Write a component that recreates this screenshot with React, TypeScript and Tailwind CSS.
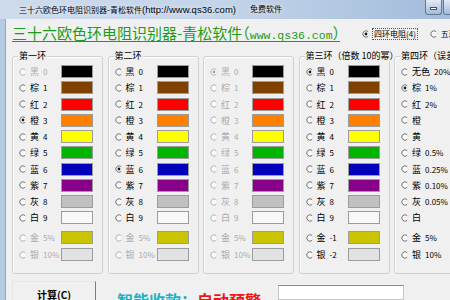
const CJK = "font-['Noto_Sans_CJK_SC',sans-serif]";

type Item = { c: string; n: string; sw?: string };

const BASE: [string, string, string][] = [
  ['黑', '0', 'bg-[#000000]'],
  ['棕', '1', 'bg-[#804000]'],
  ['红', '2', 'bg-[#ff0000]'],
  ['橙', '3', 'bg-[#ff8000]'],
  ['黄', '4', 'bg-[#ffff00]'],
  ['绿', '5', 'bg-[#00b400]'],
  ['蓝', '6', 'bg-[#0000b8]'],
  ['紫', '7', 'bg-[#880088]'],
  ['灰', '8', 'bg-[#c0c0c0]'],
  ['白', '9', 'bg-[#f8f8f8]'],
];

const mk = (gold: string, silver: string): Item[] => [
  ...BASE.map(([c, n, sw]) => ({ c, n, sw })),
  { c: '金', n: gold, sw: 'bg-[#c8c400]' },
  { c: '银', n: silver, sw: 'bg-[#e2e2e2]' },
];

const TOL: Item[] = [
  { c: '无色', n: '20%' },
  { c: '棕', n: '1%' },
  { c: '红', n: '2%' },
  { c: '橙', n: '' },
  { c: '黄', n: '' },
  { c: '绿', n: '0.5%' },
  { c: '蓝', n: '0.25%' },
  { c: '紫', n: '0.10%' },
  { c: '灰', n: '0.05%' },
  { c: '白', n: '' },
  { c: '金', n: '5%' },
  { c: '银', n: '10%' },
];

const BOXES = [
  { title: '第一环', items: mk('5%', '10%'), on: 3, dis: [0, 10, 11] },
  { title: '第二环', items: mk('5%', '10%'), on: 6, dis: [10, 11] },
  { title: '', items: mk('5%', '10%'), on: 0, dis: [0, 1, 2, 3, 4, 5, 6, 7, 8, 9, 10, 11] },
  { title: '第三环（倍数 10的幂）', items: mk('-1', '-2'), on: 0, dis: [] as number[] },
  { title: '第四环（误差范围）', items: TOL, on: 1, dis: [] as number[] },
];

function Radio({ on, dis }: { on?: boolean; dis?: boolean }) {
  return (
    <svg width="8" height="8" viewBox="0 0 8 8" className="shrink-0">
      <circle cx="4" cy="4" r="3.2" fill="#fbfbfb" stroke="#dedede" strokeWidth="0.8" />
      <path d="M6.06 1.55A3.2 3.2 0 1 0 6.06 6.45" fill="none" stroke={dis ? '#b4b4b4' : '#6e6e6e'} strokeWidth="0.9" />
      {on && <circle cx="4" cy="4" r="1.4" fill={dis ? '#a0a0a0' : '#1a1a1a'} />}
    </svg>
  );
}

function Row({ it, on, dis }: { it: Item; on: boolean; dis: boolean }) {
  return (
    <div className="flex items-center h-[13px]">
      <div className="w-[48px] flex items-center pl-[6px] gap-[3px]">
        <Radio on={on} dis={dis} />
        <span className={`text-[9px] leading-none whitespace-nowrap ${dis ? 'text-[#ababab]' : 'text-black'}`}>
          {it.c}
          {it.n && <span className="ml-[4px] text-[8px]">{it.n}</span>}
        </span>
      </div>
      {it.sw && <div className={`w-[32px] h-[13px] border border-[#9c9c9c] ${it.sw}`} />}
    </div>
  );
}

function Box({ title, items, on, dis }: { title: string; items: Item[]; on: number; dis: number[] }) {
  return (
    <div className="relative w-[91px] h-[218px] shrink-0 border border-[#d0d0d0] rounded-[3px] shadow-[inset_1px_1px_0_#ffffff] pt-[8px]">
      {title && (
        <span className="absolute -top-[7px] left-[5px] bg-[#f0f0f0] px-[1px] text-[9px] leading-[11px] whitespace-nowrap text-black">
          {title}
        </span>
      )}
      <div className="flex flex-col gap-[3.25px]">
        {items.slice(0, 10).map((it, i) => (
          <Row key={i} it={it} on={i === on} dis={dis.includes(i)} />
        ))}
      </div>
      <div className="flex flex-col gap-[4px] mt-[7px]">
        {items.slice(10).map((it, i) => (
          <Row key={i} it={it} on={i + 10 === on} dis={dis.includes(i + 10)} />
        ))}
      </div>
    </div>
  );
}

export default function App() {
  return (
    <div className={`w-[450px] h-[300px] overflow-hidden flex flex-col bg-[#f0f0f0] ${CJK}`}>
      {/* title bar */}
      <div className="h-[19px] shrink-0 flex bg-linear-to-r from-[#cedbec] via-[#c2d4e9] to-[#a3bcdb]">
        <div className="w-[425px] shrink-0 pl-[19px] flex items-center gap-[14px] text-[8px] leading-none text-black font-['Liberation_Sans','Noto_Sans_CJK_SC',sans-serif] [text-shadow:0_0_5px_#ffffff]">
          <span className="whitespace-nowrap">
            三十六欧色环电阻识别器<span className="text-[9px]">-</span>青松软件
            <span className="text-[9.5px]">(http://www.qs36.com)</span>
          </span>
          <span className="whitespace-nowrap">免费软件</span>
        </div>
        <div className="w-[17px] h-[15px] shrink-0 rounded-b-[3px] border border-t-0 border-[#62799c] bg-linear-to-b from-[#e3ebf5] to-[#a4bbd8] flex items-center justify-center pt-[3px]">
          <div className="w-[7px] h-[3px] bg-white border border-[#3f5577]" />
        </div>
        <div className="ml-[1px] w-[26px] h-[15px] shrink-0 rounded-b-[3px] border border-t-0 border-[#62799c] bg-linear-to-b from-[#e3ebf5] to-[#a4bbd8]" />
      </div>

      <div className="flex flex-1">
        <div className="w-[6px] shrink-0 bg-[#b4c9e2] border-r border-[#8ea7c7]" />
        <div className="flex-1 pl-[6px] flex flex-col">
          {/* header */}
          <div className="h-[30px] flex items-center">
            <div className="w-[350px] shrink-0 flex items-center">
              <span className="leading-[14px] text-[15px] text-[#1b9d1b] border-b border-[#1b9d1b] pb-[1px] whitespace-nowrap">
                三十六欧色环电阻识别器-青松软件
                <span className="[font-feature-settings:'halt']">（</span>
                <span className="font-['Liberation_Mono',monospace] text-[11.5px] leading-[0px]">www.qs36.com</span>
                <span className="[font-feature-settings:'halt']">）</span>
              </span>
            </div>
            <div className="flex items-center text-[8px] leading-none whitespace-nowrap">
              <Radio on />
              <span className="ml-[2px] border border-dotted border-[#555] px-[1px] py-[1px]">四环电阻(4)</span>
              <span className="ml-[12px]"><Radio /></span>
              <span className="ml-[3px]">五环电阻(5)</span>
            </div>
          </div>

          {/* ring groups */}
          <div className="flex gap-[4.5px] mt-[7px]">
            {BOXES.map((b, i) => (
              <Box key={i} {...b} />
            ))}
          </div>

          {/* bottom */}
          <div className="flex items-start">
            <div className="mt-[7px] w-[84px] h-[19px] shrink-0 border-t border-l border-[#e6e6e6] border-r border-r-[#7c7c7c] pt-[8px] text-center text-[10px] leading-[10px] font-bold text-black">
              计算(C)
            </div>
            <div className="ml-[21px] w-[161px] shrink-0 mt-[18px] text-[16px] leading-[17px] font-bold whitespace-nowrap">
              <span className="text-[#1cb3c6]">智能收款：</span>
              <span className="text-[#ee1515]">自动预警</span>
            </div>
            <div className="mt-[11px] w-[126px] h-[15px] shrink-0 bg-white border border-[#c6c6c6] border-t-[#8a8a8a]" />
          </div>
        </div>
      </div>
    </div>
  );
}
